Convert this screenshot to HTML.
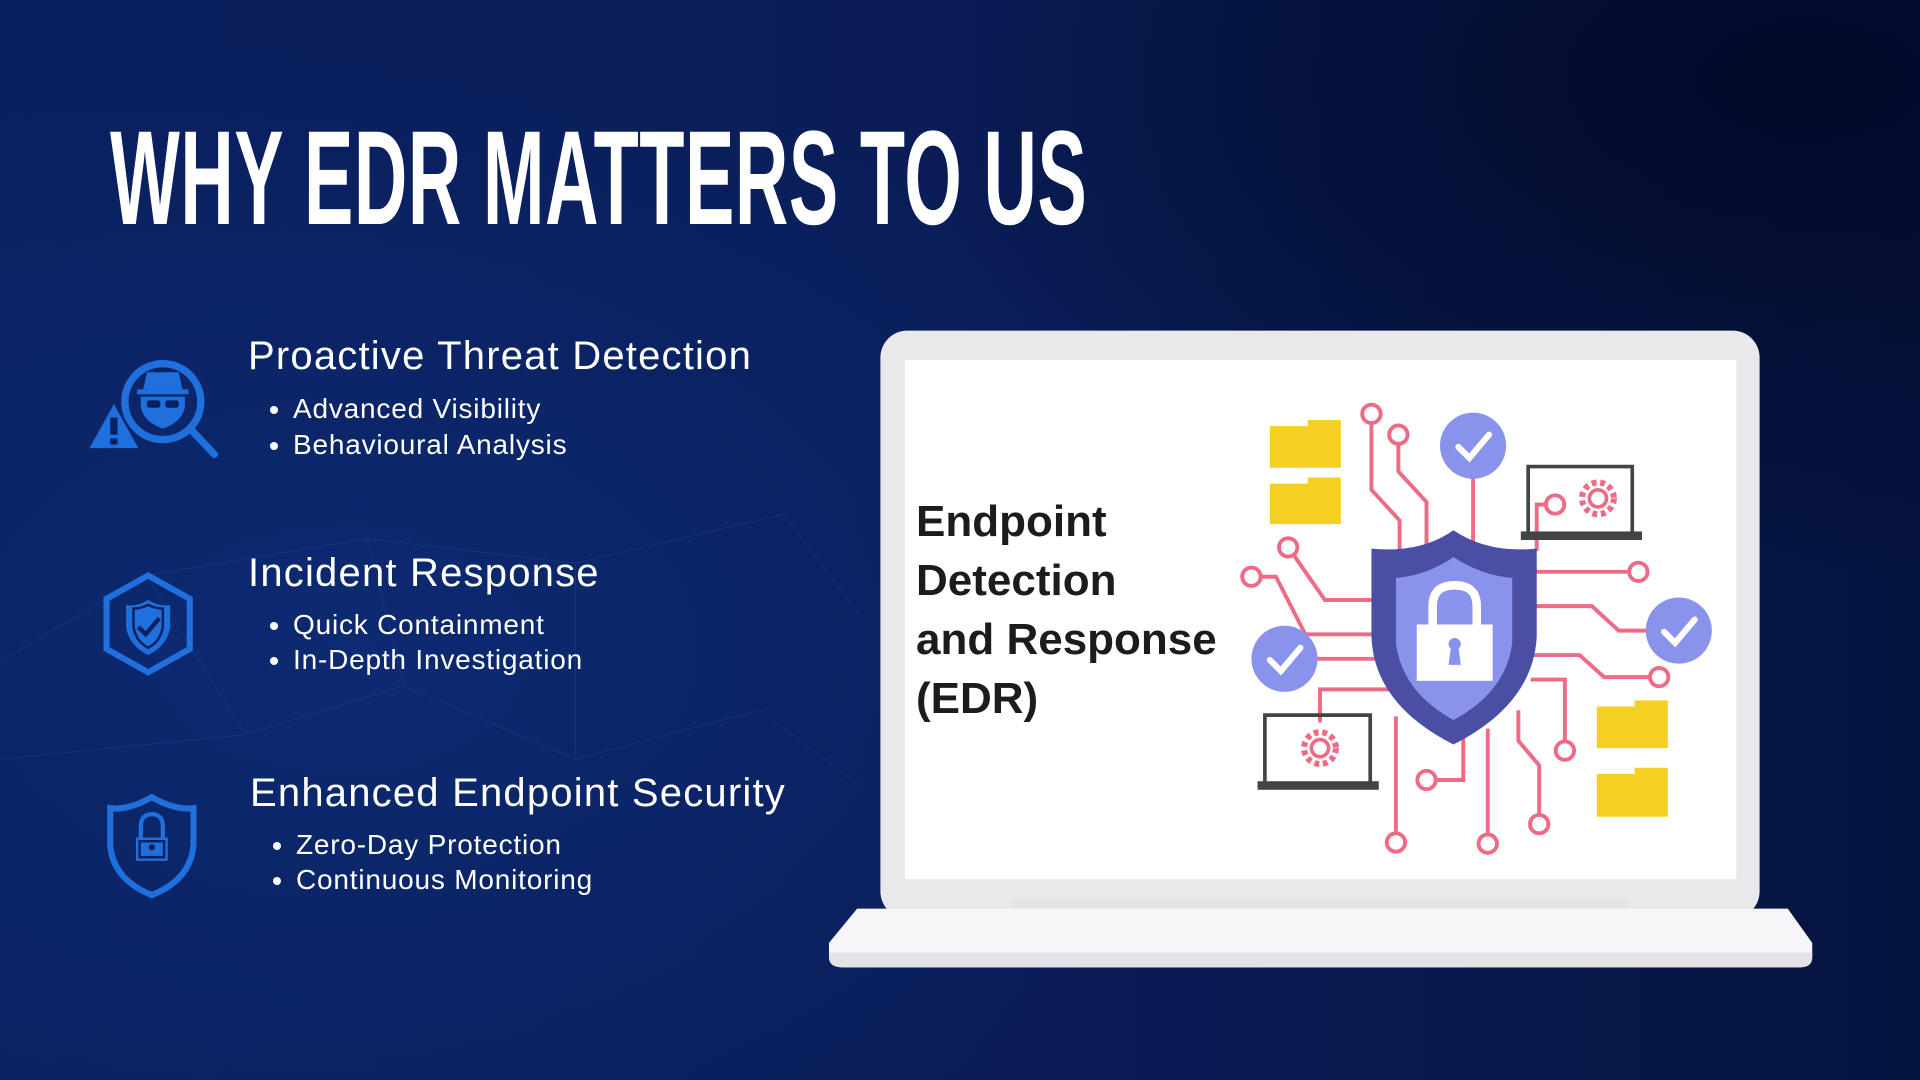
<!DOCTYPE html>
<html><head><meta charset="utf-8"><style>
html,body{margin:0;padding:0}
body{width:1920px;height:1080px;overflow:hidden;position:relative;
background:radial-gradient(ellipse 900px 600px at 350px 650px,#0d2a72 0%,rgba(13,42,114,0) 100%),
radial-gradient(ellipse 900px 500px at 1800px 80px,#020a28 0%,rgba(2,10,40,0) 100%),
linear-gradient(90deg,#0a1f5e 0%,#0a1d58 50%,#061440 100%);
font-family:"Liberation Sans",sans-serif;color:#fff}
.t{position:absolute;left:110px;top:112px;font-family:"Liberation Sans Narrow","Liberation Sans",sans-serif;font-weight:bold;font-size:134px;line-height:134px;transform:scaleX(0.552);transform-origin:0 0;white-space:nowrap;letter-spacing:1px}
.h{position:absolute;font-size:40px;line-height:40px;white-space:nowrap;letter-spacing:1.2px}
.b{position:absolute;font-size:28px;line-height:30px;white-space:nowrap;letter-spacing:0.8px}
.b:before{content:"";position:absolute;left:-23px;top:12px;width:8px;height:8px;border-radius:50%;background:#fff}
.e{position:absolute;left:916px;top:492px;color:#1c1c1c;font-weight:bold;font-size:44px;line-height:59px;white-space:nowrap}
</style></head><body>
<svg width="1920" height="1080" viewBox="0 0 1568 882" style="position:absolute;left:0;top:0">
<g stroke="#2a4a9a" stroke-width="0.8" opacity="0.35" fill="none">
<path d="M0 540 L120 470 L300 440 L470 460 L640 420 L700 500 M120 470 L200 600 L330 560 L470 620 L620 580 M300 440 L330 560 M470 460 L470 620 M0 620 L200 600 M620 580 L700 640"/>
</g>
<rect x="719" y="270" width="718" height="480" rx="22" fill="#e9e9ec"/>
<rect x="739" y="294" width="679" height="424" fill="#fff"/>
<path d="M700 742 L1460 742 L1480 770 L1480 780 Q1480 790 1470 790 L688 790 Q677 790 677 780 L677 770 Z" fill="#f6f6f8"/>
<rect x="826" y="734" width="504" height="8" fill="#e4e4e8"/>
<path d="M677 778 L1480 778 L1480 782 Q1480 790 1470 790 L688 790 Q677 790 677 782Z" fill="#e2e2e7"/>
<g stroke="#ee6b86" stroke-width="3.2" fill="none">
<path d="M1120 345 V400 L1143 425 V455"/>
<path d="M1142 362 V385 L1165 410 V448"/>
<path d="M1203 390 V445"/>
<path d="M1262 412 H1255 V450"/>
<path d="M1057 454 L1082 490 H1125"/>
<path d="M1030 471 H1042 L1066 518 H1125"/>
<path d="M1330 467 H1250"/>
<path d="M1345 515 H1322 L1300 495 H1250"/>
<path d="M1347 553 H1310 L1290 535 H1250"/>
<path d="M1075 538 H1125"/>
<path d="M1078 590 V563 H1140"/>
<path d="M1173 637 H1195 V595"/>
<path d="M1140 680 V585"/>
<path d="M1215 681 V595"/>
<path d="M1257 665 V625 L1240 605 V580"/>
<path d="M1278 605 V555 H1250"/>
</g>
<g stroke="#ee6b86" stroke-width="3.2" fill="#fff">
<circle cx="1120" cy="338" r="7.5"/><circle cx="1142" cy="355" r="7.5"/><circle cx="1270" cy="412" r="7.5"/>
<circle cx="1052" cy="447" r="7.5"/><circle cx="1022" cy="471" r="7.5"/><circle cx="1338" cy="467" r="7.5"/>
<circle cx="1355" cy="553" r="7.5"/><circle cx="1165" cy="637" r="7.5"/><circle cx="1140" cy="688" r="7.5"/>
<circle cx="1215" cy="689" r="7.5"/><circle cx="1257" cy="673" r="7.5"/><circle cx="1278" cy="613" r="7.5"/>
</g>
<g fill="#f5cf22">
<path d="M1037 348 H1068 V343 H1095 V382 H1037Z"/><path d="M1037 395 H1068 V390 H1095 V428 H1037Z"/>
<path d="M1304 577 H1335 V572 H1362 V611 H1304Z"/><path d="M1304 632 H1335 V627 H1362 V667 H1304Z"/>
</g>
<g fill="#8a93ec"><circle cx="1203" cy="364" r="27"/><circle cx="1371" cy="515" r="27"/><circle cx="1049" cy="538" r="27"/></g>
<g stroke="#fff" stroke-width="5" fill="none" stroke-linecap="round"><path d="M1191 365 L1200 374 L1216 355"/><path d="M1359 516 L1368 525 L1384 506"/><path d="M1037 539 L1046 548 L1062 529"/></g>
<g fill="none" stroke="#444" stroke-width="3"><path d="M1248 436 V381 H1333 V436"/><path d="M1033 640 V584 H1119 V640"/></g>
<rect x="1242" y="434" width="99" height="7" fill="#444"/><rect x="1027" y="638" width="99" height="7" fill="#444"/>
<g fill="none" stroke="#ee6b86" stroke-width="5" stroke-dasharray="4 3"><circle cx="1305" cy="407" r="13"/><circle cx="1078" cy="611" r="13"/></g>
<g fill="none" stroke="#ee6b86" stroke-width="3"><circle cx="1305" cy="407" r="7"/><circle cx="1078" cy="611" r="7"/></g>
<path d="M1187 433 Q1160 452 1120 448 V520 Q1122 575 1187 608 Q1252 575 1255 520 V448 Q1215 452 1187 433Z" fill="#4b4fa3"/>
<path d="M1187 455 Q1165 470 1140 472 V525 Q1145 565 1187 588 Q1230 565 1235 525 V472 Q1210 470 1187 455Z" fill="#8a93ec"/>
<rect x="1157" y="510" width="62" height="46" fill="#fff"/>
<path d="M1170 510 V495 Q1170 478 1188 478 Q1206 478 1206 495 V510" fill="none" stroke="#fff" stroke-width="7"/>
<circle cx="1188" cy="526" r="5" fill="#8a93ec"/><path d="M1185 528 L1183 543 H1193 L1191 528Z" fill="#8a93ec"/>
<g fill="none" stroke="#1f6fdc" stroke-width="6" stroke-linecap="round">
<circle cx="133" cy="328" r="31"/><path d="M157 352 L175 371"/>
<path d="M121 470 L155 489 V530 L121 549 L87 530 V489Z" stroke-width="5"/>
<path d="M124 651 Q105 662 90 660 V690 Q92 718 124 731 Q156 718 158 690 V660 Q143 662 124 651Z" stroke-width="5"/>
<path d="M115 684 V675 Q115 665 124 665 Q133 665 133 675 V684" stroke-width="3.5"/>
</g>
<g fill="#1f6fdc">
<path d="M93 330 L113 366 H73Z"/>
<path d="M112 318 H154 V322 H112Z"/><path d="M120 304 H146 L149 318 H117Z"/>
<path d="M115 324 H151 V333 Q148 345 133 350 Q118 345 115 333Z"/>
<path d="M121 490 Q111 496 103 494 V512 Q105 527 121 535 Q137 527 139 512 V494 Q131 496 121 490Z"/>
<path d="M111 684 H137 V703 H111Z"/>
</g>
<rect x="90" y="341" width="6" height="14" fill="#0a1f5e"/><rect x="90" y="358" width="6" height="5" fill="#0a1f5e"/>
<g fill="#0a1f5e"><rect x="120" y="327" width="11" height="6" rx="2"/><rect x="135" y="327" width="11" height="6" rx="2"/></g>
<path d="M113 512 L119 518 L130 505" stroke="#0a1f5e" stroke-width="3.5" fill="none"/>
<path d="M109 497 Q115 497 121 494 Q127 497 133 497 V512 Q131 524 121 529 Q111 524 109 512Z" fill="none" stroke="#0a1f5e" stroke-width="2"/>
<rect x="114" y="687" width="20" height="13" fill="none" stroke="#0a1f5e" stroke-width="2"/>
<circle cx="124" cy="692" r="2.5" fill="#0a1f5e"/>
</svg>
<div class="t">WHY EDR MATTERS TO US</div>
<div class="h" style="left:248px;top:336px">Proactive Threat Detection</div>
<div class="b" style="left:293px;top:394px">Advanced Visibility</div>
<div class="b" style="left:293px;top:430px">Behavioural Analysis</div>
<div class="h" style="left:248px;top:553px">Incident Response</div>
<div class="b" style="left:293px;top:610px">Quick Containment</div>
<div class="b" style="left:293px;top:645px">In-Depth Investigation</div>
<div class="h" style="left:250px;top:773px">Enhanced Endpoint Security</div>
<div class="b" style="left:296px;top:830px">Zero-Day Protection</div>
<div class="b" style="left:296px;top:865px">Continuous Monitoring</div>
<div class="e">Endpoint<br>Detection<br>and Response<br>(EDR)</div>
</body></html>
